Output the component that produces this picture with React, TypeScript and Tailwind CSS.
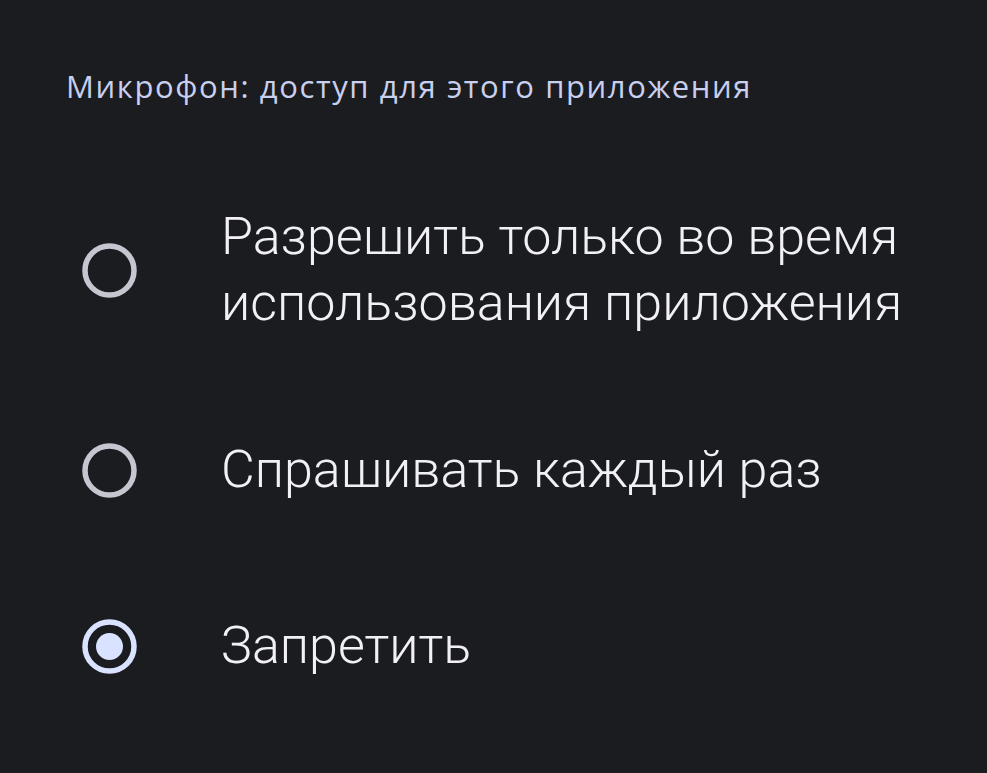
import React from "react";

type Option = { label: string[]; selected?: boolean; gap: string };

const options: Option[] = [
  { label: ["Разрешить только во время", "использования приложения"], gap: "mt-[100px]" },
  { label: ["Спрашивать каждый раз"], gap: "mt-[101px]" },
  { label: ["Запретить"], selected: true, gap: "mt-[110px]" },
];

function Radio({ selected }: { selected?: boolean }) {
  const color = selected ? "#d9e2ff" : "#c4c6d0";
  return (
    <svg width="55" height="55" viewBox="0 0 55 55" className="shrink-0">
      <circle cx="27.5" cy="27.5" r="24.5" fill="none" stroke={color} strokeWidth="5.5" />
      {selected && <circle cx="27.5" cy="27.5" r="13.5" fill={color} />}
    </svg>
  );
}

export default function App() {
  return (
    <div className="min-h-screen w-full bg-[#1b1c1f] font-['Roboto',sans-serif] pb-10">
      {/* Section header */}
      <div className="pl-[66px] pt-[68px] font-['Open_Sans',sans-serif] text-[31px] leading-[36px] tracking-[1.6px] text-[#c8cfef]">
        Микрофон: доступ для этого приложения
      </div>

      {/* Options */}
      <div className="flex flex-col">
        {options.map((o) => (
          <div key={o.label[0]} className={`${o.gap} flex items-center pl-[82px]`}>
            <Radio selected={o.selected} />
            <div className="ml-[84px] text-[52px] font-light leading-[66px] text-[#f1f0f4]">
              {o.label.map((l) => (
                <div key={l}>{l}</div>
              ))}
            </div>
          </div>
        ))}
      </div>
    </div>
  );
}
